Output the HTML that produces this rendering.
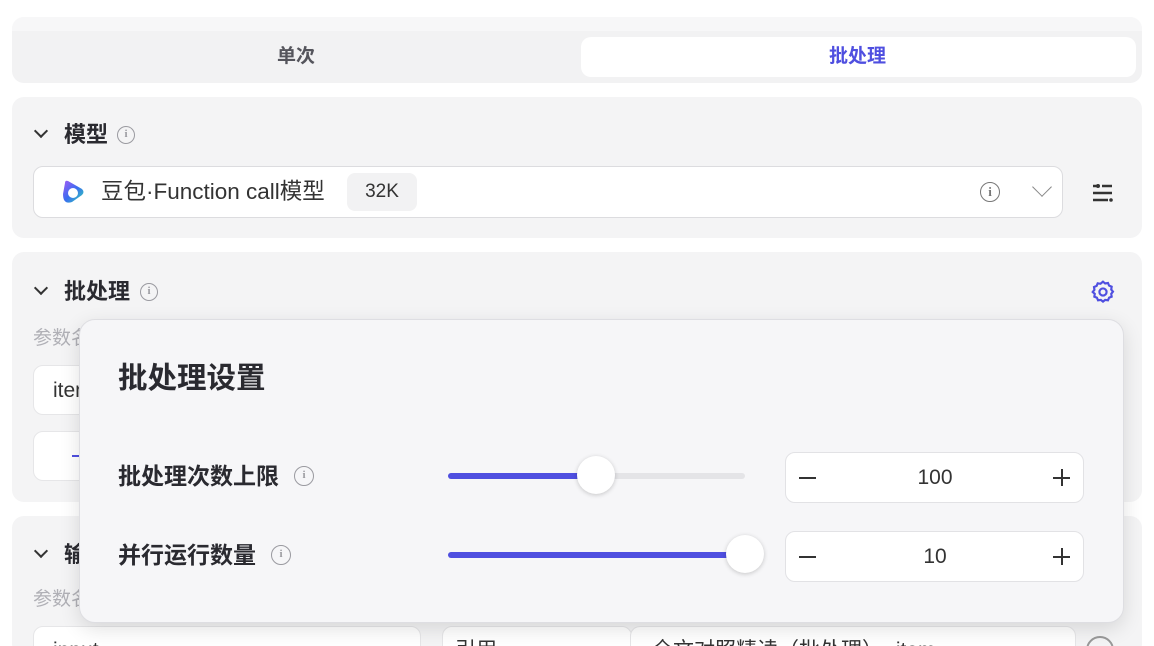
<!DOCTYPE html>
<html><head><meta charset="utf-8"><style>
*{box-sizing:border-box;margin:0;padding:0}
html,body{width:1154px;height:646px;overflow:hidden}
body{background:#fff;font-family:"Liberation Sans","Noto Sans CJK SC",sans-serif;color:#1f1f24;position:relative;line-height:1}
.abs{position:absolute}
.panel{position:absolute;left:12px;width:1130px;background:#f4f4f5;border-radius:12px}
.t{position:absolute;font-size:22px;font-weight:bold;color:#2a2a30}
.muted{color:#b0b0b6;font-size:19px;position:absolute}
.box{position:absolute;background:#fff;border:1px solid #dcdcdf;border-radius:10px}
.info{position:absolute;width:18px;height:18px;border:1.5px solid #9a9aa0;border-radius:50%;font-size:11px;color:#9a9aa0;text-align:center;line-height:15px;font-family:"Liberation Serif",serif;font-weight:bold}
.chev{position:absolute;width:10px;height:10px;border-right:2.5px solid #333;border-bottom:2.5px solid #333;transform:rotate(45deg)}
</style></head><body>
<div class="abs" style="left:12px;top:17px;width:1130px;height:66px;background:#f2f2f3;border-radius:12px"></div>
<div class="abs" style="left:12px;top:17px;width:1130px;height:14px;background:#f7f7f8;border-radius:12px 12px 0 0"></div>
<div class="abs" style="left:277px;top:47px;font-size:19px;font-weight:bold;color:#55555c">单次</div>
<div class="abs" style="left:581px;top:37px;width:555px;height:40px;background:#fff;border-radius:10px"></div>
<div class="abs" style="left:829px;top:47px;font-size:19px;font-weight:bold;color:#4f4fe0">批处理</div>

<div class="panel" style="top:97px;height:141px"></div>
<div class="chev" style="left:36px;top:126px"></div>
<div class="t" style="left:64px;top:124px">模型</div>
<div class="info" style="left:117px;top:126px">i</div>
<div class="box" style="left:33px;top:166px;width:1030px;height:52px"></div>
<svg class="abs" style="left:60px;top:179px" width="26" height="26" viewBox="0 0 26 26"><defs><linearGradient id="g" x1="0" y1="0" x2="1" y2="1"><stop offset="0" stop-color="#a35cf5"/><stop offset=".5" stop-color="#3a6cf0"/><stop offset="1" stop-color="#2fd8b0"/></linearGradient></defs><path d="M5 4 Q5 1 8 2 L22 10 Q25 13 22 16 L12 23 Q3 26 3 15 Z" fill="url(#g)"/><circle cx="13" cy="14" r="5" fill="#fff"/></svg>
<div class="abs" style="left:101px;top:181px;font-size:22.5px;color:#333">豆包·Function call模型</div>
<div class="abs" style="left:347px;top:173px;width:70px;height:38px;background:#f2f2f3;border-radius:8px;font-size:19px;text-align:center;line-height:38px;color:#333">32K</div>
<div class="info" style="left:980px;top:182px;width:20px;height:20px;font-size:13px;line-height:17px;color:#777;border-color:#777">i</div>
<div class="abs" style="left:1035px;top:180px;width:14px;height:14px;border-right:1.5px solid #888;border-bottom:1.5px solid #888;transform:rotate(45deg)"></div>
<svg class="abs" style="left:1090px;top:181px" width="26" height="22"><g stroke="#333" stroke-width="2.5"><line x1="3" y1="5" x2="8" y2="5"/><line x1="12" y1="5" x2="22" y2="5"/><line x1="3" y1="12" x2="22" y2="12"/><line x1="3" y1="19" x2="18" y2="19"/></g><circle cx="8" cy="5" r="2" fill="#333"/><circle cx="21" cy="19" r="1.8" fill="#333"/></svg>

<div class="panel" style="top:252px;height:250px"></div>
<div class="chev" style="left:36px;top:283px"></div>
<div class="t" style="left:64px;top:281px">批处理</div>
<div class="info" style="left:140px;top:283px">i</div>
<svg class="abs" style="left:1090px;top:279px" width="26" height="26" viewBox="0 0 24 24" fill="none" stroke="#4f4fe0" stroke-width="2"><path d="M12 2.5l2 1.6 2.6-.4 1 2.4 2.4 1-.4 2.6 1.6 2-1.6 2 .4 2.6-2.4 1-1 2.4-2.6-.4-2 1.6-2-1.6-2.6.4-1-2.4-2.4-1 .4-2.6L2.5 12l1.6-2-.4-2.6 2.4-1 1-2.4 2.6.4z"/><circle cx="12" cy="12" r="3.3"/></svg>
<div class="muted" style="left:33px;top:329px">参数名</div>
<div class="box" style="left:33px;top:365px;width:120px;height:50px;border-color:#e6e6e8"></div>
<div class="abs" style="left:53px;top:380px;font-size:21px;color:#333">item</div>
<div class="box" style="left:33px;top:431px;width:120px;height:50px;border-color:#e6e6e8"></div>
<div class="abs" style="left:72px;top:455px;width:8px;height:2px;background:#4f4fe0"></div>

<div class="panel" style="top:516px;height:140px"></div>
<div class="chev" style="left:36px;top:546px"></div>
<div class="t" style="left:64px;top:544px">输出</div>
<div class="muted" style="left:33px;top:590px">参数名</div>
<div class="box" style="left:33px;top:626px;width:388px;height:50px;border-color:#e6e6e8"></div>
<div class="abs" style="left:53px;top:640px;font-size:21px;color:#333">input</div>
<div class="box" style="left:442px;top:626px;width:190px;height:50px;border-color:#e6e6e8"></div>
<div class="abs" style="left:455px;top:640px;font-size:21px;color:#333">引用</div>
<div class="box" style="left:630px;top:626px;width:446px;height:50px;border-color:#e6e6e8"></div>
<div class="abs" style="left:652px;top:640px;font-size:21px;color:#333">全文对照精读（批处理）- item</div>
<div class="abs" style="left:1086px;top:636px;width:28px;height:28px;border:2px solid #999;border-radius:50%"></div>

<div class="abs" style="left:79px;top:319px;width:1045px;height:304px;background:#f6f6f8;border:1px solid #dedee2;border-radius:16px;box-shadow:0 6px 20px rgba(0,0,0,.12)"></div>
<div class="abs" style="left:118px;top:364px;font-size:29.5px;font-weight:bold;color:#2a2a30">批处理设置</div>
<div class="abs" style="left:118px;top:465px;font-size:23px;font-weight:bold;color:#2a2a30">批处理次数上限</div>
<div class="info" style="left:294px;top:466px;width:20px;height:20px;line-height:17px">i</div>
<div class="abs" style="left:118px;top:544px;font-size:23px;font-weight:bold;color:#2a2a30">并行运行数量</div>
<div class="info" style="left:271px;top:545px;width:20px;height:20px;line-height:17px">i</div>
<div class="abs" style="left:448px;top:473px;width:297px;height:6px;background:#e4e4e7;border-radius:3px"></div>
<div class="abs" style="left:448px;top:473px;width:150px;height:6px;background:#4f4fe0;border-radius:3px"></div>
<div class="abs" style="left:577px;top:456px;width:38px;height:38px;background:#fff;border-radius:50%;box-shadow:0 1px 5px rgba(0,0,0,.2)"></div>
<div class="abs" style="left:448px;top:552px;width:297px;height:6px;background:#4f4fe0;border-radius:3px"></div>
<div class="abs" style="left:726px;top:535px;width:38px;height:38px;background:#fff;border-radius:50%;box-shadow:0 1px 5px rgba(0,0,0,.2)"></div>
<div class="box" style="left:785px;top:452px;width:299px;height:51px;border-color:#e2e2e5"></div>
<div class="box" style="left:785px;top:531px;width:299px;height:51px;border-color:#e2e2e5"></div>
<div class="abs" style="left:799px;top:477px;width:17px;height:2px;background:#333"></div>
<div class="abs" style="left:1053px;top:477px;width:17px;height:2px;background:#333"></div>
<div class="abs" style="left:1060.5px;top:469px;width:2px;height:17px;background:#333"></div>
<div class="abs" style="left:799px;top:556px;width:17px;height:2px;background:#333"></div>
<div class="abs" style="left:1053px;top:556px;width:17px;height:2px;background:#333"></div>
<div class="abs" style="left:1060.5px;top:548px;width:2px;height:17px;background:#333"></div>
<div class="abs" style="left:885px;top:467px;width:100px;text-align:center;font-size:21px;color:#333">100</div>
<div class="abs" style="left:885px;top:546px;width:100px;text-align:center;font-size:21px;color:#333">10</div>
</body></html>
